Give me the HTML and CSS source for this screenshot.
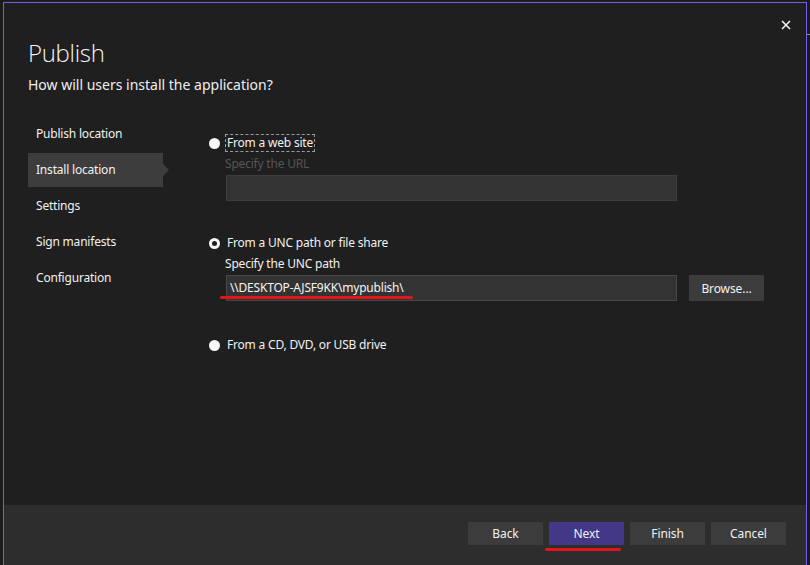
FILE: index.html
```html
<!DOCTYPE html>
<html>
<head>
<meta charset="utf-8">
<link rel="stylesheet" href="styles.css">
</head>
<body>
<div class="screen">
  <div class="dialog">
    <button class="close" aria-label="Close">
      <svg width="10" height="10" viewBox="0 0 10 10"><path d="M1 1 L9 9 M9 1 L1 9" stroke="#f2f2f2" stroke-width="1.6" fill="none"/></svg>
    </button>
    <header class="head">
      <h1 class="title">Publish</h1>
      <p class="subtitle">How will users install the application?</p>
    </header>
    <div class="body">
      <nav class="side">
        <div class="nav-item">Publish location</div>
        <div class="nav-item active">Install location</div>
        <div class="nav-item">Settings</div>
        <div class="nav-item">Sign manifests</div>
        <div class="nav-item">Configuration</div>
      </nav>
      <section class="content">
        <div class="option first">
          <span class="radio filled"></span>
          <span class="opt-label focus">From a web site</span>
        </div>
        <div class="field-label disabled">Specify the URL</div>
        <div class="field-row">
          <div class="input disabled-input"></div>
        </div>

        <div class="option second">
          <span class="radio ring"></span>
          <span class="opt-label">From a UNC path or file share</span>
        </div>
        <div class="field-label">Specify the UNC path</div>
        <div class="field-row">
          <div class="input">\\DESKTOP-AJSF9KK\mypublish\</div>
          <button class="btn browse">Browse...</button>
          <span class="mark mark-path"></span>
        </div>

        <div class="option third">
          <span class="radio filled"></span>
          <span class="opt-label">From a CD, DVD, or USB drive</span>
        </div>
      </section>
    </div>
    <footer class="foot">
      <div class="buttons">
        <button class="btn">Back</button>
        <button class="btn primary">Next<span class="mark mark-next"></span></button>
        <button class="btn">Finish</button>
        <button class="btn">Cancel</button>
      </div>
    </footer>
  </div>
  <div class="edge"><span class="edge-line"></span></div>
</div>
</body>
</html>
```
FILE: styles.css
```css
html, body {
  margin: 0;
  padding: 0;
  background: #1c1c1c;
  overflow: hidden;
  width: 810px;
  height: 565px;
}
body {
  font-family: "Noto Sans", "Open Sans", sans-serif;
  font-size: 12px;
  letter-spacing: -0.2px;
  color: #f1f1f1;
}
.screen {
  display: flex;
  padding: 2px 0 0 3px;
  height: 565px;
  box-sizing: border-box;
}
.dialog {
  position: relative;
  width: 804px;
  height: 580px;
  box-sizing: border-box;
  border: 1px solid #7160e8;
  background: #1f1f1f;
  display: flex;
  flex-direction: column;
  flex: none;
}
.edge {
  flex: 1;
  position: relative;
  background: #1a1a1a;
}
.edge-line {
  position: absolute;
  top: 32px;
  left: 0;
  right: 0;
  height: 1px;
  background: #5fbf3f;
}
.close {
  position: absolute;
  top: 14px;
  right: 12px;
  width: 16px;
  height: 16px;
  padding: 0;
  border: 0;
  background: transparent;
  display: flex;
  align-items: center;
  justify-content: center;
}
.head {
  flex: none;
  padding: 35px 0 0 24px;
  height: 111px;
  box-sizing: border-box;
}
.title {
  margin: 0;
  font-family: "Open Sans", sans-serif;
  font-weight: 300;
  font-size: 24px;
  line-height: 30px;
  letter-spacing: -0.3px;
  color: #f4f4f4;
}
.subtitle {
  margin: 7px 0 0;
  font-size: 14px;
  line-height: 20px;
  letter-spacing: 0;
  color: #eeeeee;
}
.body {
  flex: none;
  display: flex;
  height: 391px;
}
.side {
  width: 135px;
  margin-left: 24px;
  padding-top: 3px;
  display: flex;
  flex-direction: column;
  gap: 2px;
}
.nav-item {
  position: relative;
  height: 34px;
  line-height: 34px;
  padding-left: 8px;
  color: #f1f1f1;
}
.nav-item.active {
  background: #3d3d3d;
}
.nav-item.active::after {
  content: "";
  position: absolute;
  right: -6px;
  top: 11px;
  border-top: 6px solid transparent;
  border-bottom: 6px solid transparent;
  border-left: 6px solid #3d3d3d;
}
.content {
  margin-left: 46px;
  width: 560px;
}
.option {
  display: flex;
  align-items: center;
  height: 18px;
}
.option.first { margin-top: 20px; }
.option.second { margin-top: 33px; }
.option.third { margin-top: 35px; }
.radio {
  width: 11px;
  height: 11px;
  border-radius: 50%;
  box-sizing: border-box;
  flex: none;
  margin-right: 6px;
}
.radio.filled {
  background: #f8f8f8;
}
.radio.ring {
  border: 3px solid #f8f8f8;
  background: #1f1f1f;
}
.opt-label {
  padding: 0 1px;
  line-height: 16px;
  border: 1px solid transparent;
  margin-left: -1px;
}
.opt-label.focus {
  border: 1px dashed #9a9a9a;
}
.field-label {
  margin: 2px 0 0 16px;
  line-height: 20px;
  color: #f1f1f1;
}
.field-label.disabled {
  color: #555555;
}
.field-row {
  position: relative;
  display: flex;
  gap: 12px;
  margin: 1px 0 0 17px;
}
.input {
  width: 451px;
  height: 26px;
  box-sizing: border-box;
  background: #333333;
  border: 1px solid #474747;
  padding-left: 3px;
  line-height: 24px;
  color: #f4f4f4;
}
.disabled-input {
  border-color: #3d3d3d;
}
.btn {
  position: relative;
  width: 75px;
  height: 26px;
  border: 0;
  background: #3c3c3c;
  color: #f1f1f1;
  font-family: "Noto Sans", "Open Sans", sans-serif;
  font-size: 12px;
  letter-spacing: -0.1px;
  padding: 0;
}
.browse {
  flex: none;
}
.foot {
  flex: 1;
  background: #2d2d2d;
  padding-top: 17px;
  box-sizing: border-box;
}
.buttons {
  display: flex;
  justify-content: flex-end;
  gap: 6px;
  padding-right: 20px;
}
.buttons .btn {
  height: 23px;
}
.btn.primary {
  background: #433787;
}
.mark {
  position: absolute;
  height: 3px;
  border-radius: 2px;
  background: #e0161a;
}
.mark-path {
  left: -6px;
  top: 21px;
  width: 193px;
}
.mark-next {
  left: -4px;
  top: 26px;
  width: 76px;
}
```
